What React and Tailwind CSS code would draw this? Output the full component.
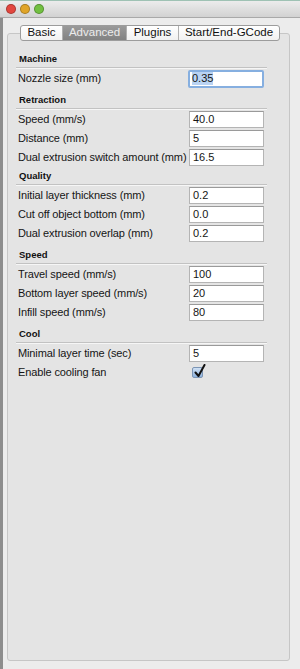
import React from 'react';

// Sections of the Advanced settings tab
const sections = [
  {
    title: 'Machine',
    mt: 'mt-0',
    rows: [{ label: 'Nozzle size (mm)', value: '0.35', focused: true }],
  },
  {
    title: 'Retraction',
    mt: 'mt-[5px]',
    rows: [
      { label: 'Speed (mm/s)', value: '40.0' },
      { label: 'Distance (mm)', value: '5' },
      { label: 'Dual extrusion switch amount (mm)', value: '16.5' },
    ],
  },
  {
    title: 'Quality',
    mt: 'mt-[2px]',
    rows: [
      { label: 'Initial layer thickness (mm)', value: '0.2' },
      { label: 'Cut off object bottom (mm)', value: '0.0' },
      { label: 'Dual extrusion overlap (mm)', value: '0.2' },
    ],
  },
  {
    title: 'Speed',
    mt: 'mt-[5px]',
    rows: [
      { label: 'Travel speed (mm/s)', value: '100' },
      { label: 'Bottom layer speed (mm/s)', value: '20' },
      { label: 'Infill speed (mm/s)', value: '80' },
    ],
  },
  {
    title: 'Cool',
    mt: 'mt-[5px]',
    rows: [
      { label: 'Minimal layer time (sec)', value: '5' },
      { label: 'Enable cooling fan', checkbox: true },
    ],
  },
];

const tabs = [
  { name: 'Basic', w: 'w-[41px]' },
  { name: 'Advanced', w: 'w-[64px]', active: true },
  { name: 'Plugins', w: 'w-[52px]' },
  { name: 'Start/End-GCode', w: 'w-[101px]' },
];

const TrafficLight = ({ color }) => (
  <span className={`w-[10px] h-[10px] rounded-full border border-black/25 ${color}`} />
);

const Checkbox = () => (
  <div className="relative w-[11px] h-[11px] rounded-[2px] border border-[#7c95b5] bg-gradient-to-b from-[#cfe0f4] to-[#8fb3dd]">
    <svg className="absolute -top-[4px] left-[1px]" width="12" height="14" viewBox="0 0 12 14">
      <path d="M1.5 8.5 L4.5 12 L10.5 1" fill="none" stroke="#111" strokeWidth="2" strokeLinecap="round" strokeLinejoin="round" />
    </svg>
  </div>
);

const Row = ({ row }) => (
  <div className="flex items-center h-[19px]">
    <span className="w-[173px] pl-[2px] text-[11px] tracking-[-0.12px] text-[#151515] whitespace-nowrap">{row.label}</span>
    {row.checkbox ? (
      <div className="pl-[3px]">
        <Checkbox />
      </div>
    ) : row.focused ? (
      <div className="w-[76px] h-[18px] -mx-[1px] rounded-[2px] border-2 border-[#86afe0] bg-white flex items-center pl-[2px]">
        <span className="text-[11px] leading-[13px] text-[#151515] bg-[#b9d3f3]">{row.value}</span>
      </div>
    ) : (
      <div className="w-[75px] h-[17px] border border-[#b4b4b4] border-t-[#9a9a9a] bg-white flex items-center pl-[3px] text-[11px] text-[#151515]">
        {row.value}
      </div>
    )}
  </div>
);

export default function App() {
  return (
    <div
      className="w-[300px] h-[669px] bg-[#ececec] flex flex-col overflow-hidden"
      style={{ fontFamily: '"Liberation Sans", Arial, sans-serif' }}
    >
      {/* Barra de título */}
      <div className="h-[18px] shrink-0 flex items-center gap-[4px] pl-[6px] bg-gradient-to-b from-[#ececec] to-[#d2d2d2] border-t border-t-[#9fc2b4] border-b border-b-[#a9a9a9]">
        <TrafficLight color="bg-[#e2473f]" />
        <TrafficLight color="bg-[#e0a528]" />
        <TrafficLight color="bg-[#72c041]" />
      </div>

      <div className="flex-1 flex border-l-[3px] border-l-[#8d8d8d]">
        <div className="flex-1 pl-[4px] pr-[10px] pt-[7px] pb-[8px] flex flex-col">
          {/* Abas */}
          <div className="relative z-10 ml-[13px] flex h-[16px] w-fit rounded-[3px] border border-[#9c9c9c] bg-gradient-to-b from-white to-[#f1f1f1] overflow-hidden">
            {tabs.map((t, i) => (
              <div
                key={t.name}
                className={`${t.w} flex items-center justify-center text-[11.5px] leading-none ${
                  i > 0 ? 'border-l border-l-[#b0b0b0]' : ''
                } ${t.active ? 'bg-gradient-to-b from-[#9a9a9a] to-[#828282] text-[#ececec]' : 'text-[#111]'}`}
              >
                {t.name}
              </div>
            ))}
          </div>

          {/* Painel */}
          <div className="-mt-[8px] flex-1 rounded-[3px] border border-[#c6c6c6] bg-[#e4e4e4] pt-[18px] pl-[8px] pr-[22px]">
            {sections.map(s => (
              <div key={s.title} className={s.mt}>
                <div className="h-[16px] flex items-center pl-[3px] text-[9.5px] font-bold text-[#111] border-b border-b-[#c2c2c2] shadow-[0_1px_0_#f6f6f6]">
                  {s.title}
                </div>
                <div className="pt-[1px]">
                  {s.rows.map(r => (
                    <Row key={r.label} row={r} />
                  ))}
                </div>
              </div>
            ))}
          </div>
        </div>
      </div>
    </div>
  );
}
